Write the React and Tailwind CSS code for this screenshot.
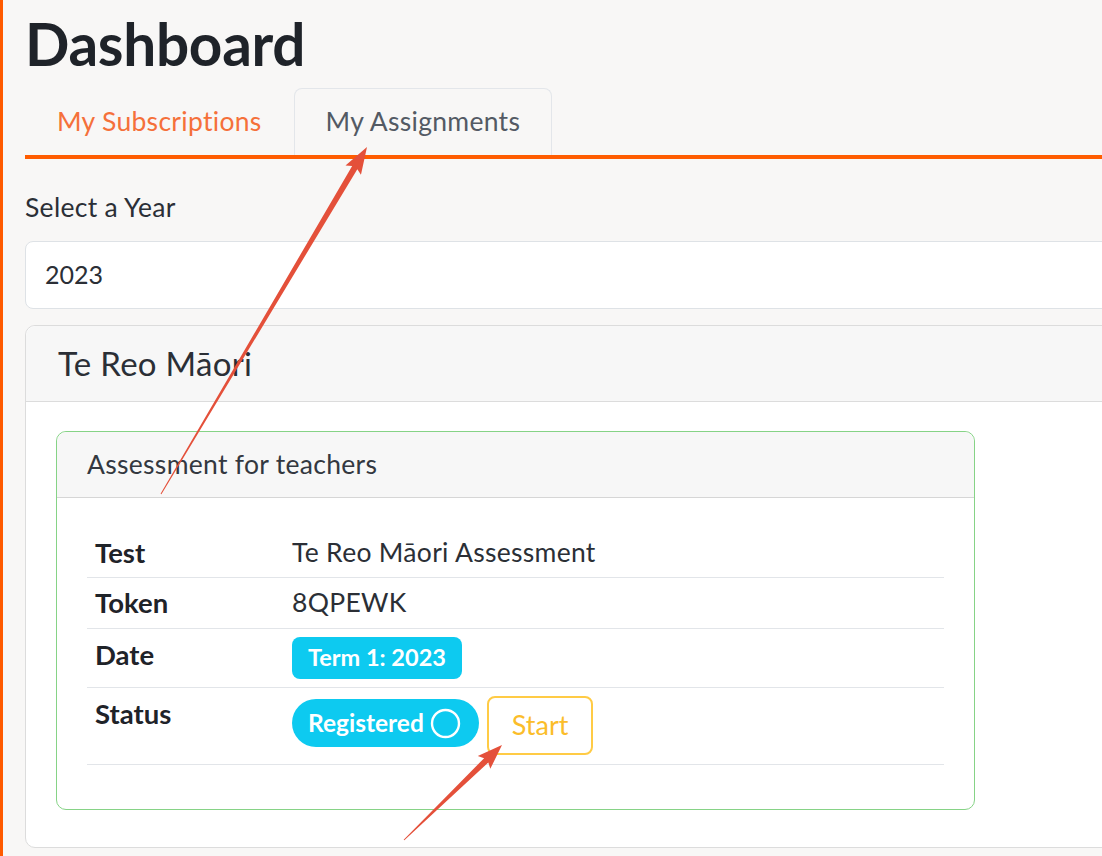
import React from 'react';

const arrowPoints = (tail, tip, headLen = 22, headHalf = 9, shaftHalf = 3) => {
  const dx = tip[0] - tail[0];
  const dy = tip[1] - tail[1];
  const len = Math.hypot(dx, dy);
  const d = [dx / len, dy / len];
  const n = [-d[1], d[0]];
  const b = [tip[0] - d[0] * headLen, tip[1] - d[1] * headLen];
  const w = [b[0] - d[0] * 3, b[1] - d[1] * 3];
  const pts = [
    [tail[0] + n[0] * 0.5, tail[1] + n[1] * 0.5],
    [b[0] + n[0] * shaftHalf, b[1] + n[1] * shaftHalf],
    [w[0] + n[0] * headHalf, w[1] + n[1] * headHalf],
    tip,
    [w[0] - n[0] * headHalf, w[1] - n[1] * headHalf],
    [b[0] - n[0] * shaftHalf, b[1] - n[1] * shaftHalf],
    [tail[0] - n[0] * 0.5, tail[1] - n[1] * 0.5],
  ];
  return pts.map((p) => p.join(',')).join(' ');
};

const rows = [
  { label: 'Test', value: 'Te Reo Māori Assessment', h: 'h-[50px]' },
  { label: 'Token', value: '8QPEWK', h: 'h-[51px]' },
];

export default function App() {
  return (
    <div
      className="relative flex min-h-screen w-full overflow-hidden bg-[#f8f7f6] text-[#212529]"
      style={{ fontFamily: 'Lato, "Noto Sans", sans-serif' }}
    >
      <div className="w-[3px] shrink-0 bg-[#ff5a00]" />

      <div className="w-[1160px] shrink-0 pl-[22px] pt-[8px]">
        <h1 className="text-[58.5px] font-bold leading-[70px] tracking-[-0.3px] text-[#1f2329]">Dashboard</h1>

        {/* Tabs */}
        <div className="mt-[10px] flex border-b-4 border-[#ff5c00]">
          <div className="flex h-[67px] items-center rounded-t-[8px] px-[32px] text-[26.5px] tracking-[0.3px] text-[#f5703a]">
            My Subscriptions
          </div>
          <div className="flex h-[67px] items-center rounded-t-[8px] border border-b-0 border-[#e3e6ea] px-[31px] text-[26.5px] tracking-[0.3px] text-[#535a64]">
            My Assignments
          </div>
        </div>

        <div className="mt-[33px] text-[26.5px] leading-[30px] tracking-[0.3px] text-[#2b2f36]">Select a Year</div>

        <div className="mt-[19px] flex h-[68px] items-center rounded-[8px] border border-[#dee2e6] bg-white px-[19px] text-[25px] text-[#2b2f36]">
          2023
        </div>

        {/* Subject card */}
        <div className="mt-[16px] rounded-[10px] border border-[#dcdcdc] bg-white">
          <div className="flex h-[76px] items-center rounded-t-[10px] border-b border-[#dcdcdc] bg-[#f7f7f7] px-[32px] text-[33px] tracking-[0.3px] text-[#2b2f36]">
            Te Reo Māori
          </div>

          <div className="px-[30px] pb-[37px] pt-[29px]">
            <div className="w-[919px] rounded-[10px] border-[1.5px] border-[#86d386] bg-white">
              <div className="flex h-[66px] items-center rounded-t-[10px] border-b border-[#d6d6d6] bg-[#f7f7f7] px-[30px] text-[26.5px] tracking-[0.3px] text-[#333840]">
                Assessment for teachers
              </div>

              <div className="px-[30px] pb-[44px] pt-[30px] text-[26.5px]">
                {rows.map((r) => (
                  <div key={r.label} className={`flex ${r.h} items-start border-b border-[#e2e5e9] pt-[7px] leading-[35px]`}>
                    <div className="w-[205px] pl-[8px] text-[27.5px] font-bold text-[#1f2329]">{r.label}</div>
                    <div className="tracking-[0.3px] text-[#2b2f36]">{r.value}</div>
                  </div>
                ))}

                <div className="flex h-[59px] items-start border-b border-[#e2e5e9] pt-[8px]">
                  <div className="w-[205px] pl-[8px] text-[27.5px] font-bold leading-[35px] text-[#1f2329]">Date</div>
                  <div className="flex h-[42px] items-center rounded-[8px] bg-[#0dcaf0] px-[16px] text-[23.5px] font-bold text-white">
                    Term 1: 2023
                  </div>
                </div>

                <div className="flex h-[77px] items-start border-b border-[#e2e5e9] pt-[8px]">
                  <div className="w-[205px] pl-[8px] text-[27.5px] font-bold leading-[35px] text-[#1f2329]">Status</div>
                  <div className="mt-[3px] flex h-[48px] items-center gap-[6px] rounded-full bg-[#0dcaf0] pl-[16px] pr-[18px] text-[24.5px] font-bold text-white">
                    Registered
                    <svg width="31" height="31" viewBox="0 0 31 31">
                      <circle cx="15.5" cy="15.5" r="13.5" fill="none" stroke="white" strokeWidth="2.4" />
                    </svg>
                  </div>
                  <button className="ml-[8px] flex h-[59px] items-center rounded-[8px] border-2 border-[#ffcb45] bg-white px-[23px] text-[27px] text-[#fbbd2a]">
                    Start
                  </button>
                </div>
              </div>
            </div>
          </div>
        </div>
      </div>

      {/* annotation arrows */}
      <svg className="pointer-events-none absolute left-0 top-0" width="1102" height="856">
        <polygon points={arrowPoints([161, 494], [367, 147], 24, 9, 3)} fill="#e4503a" />
        <polygon points={arrowPoints([404, 840], [502, 745], 22, 9, 3)} fill="#e4503a" />
      </svg>
    </div>
  );
}
